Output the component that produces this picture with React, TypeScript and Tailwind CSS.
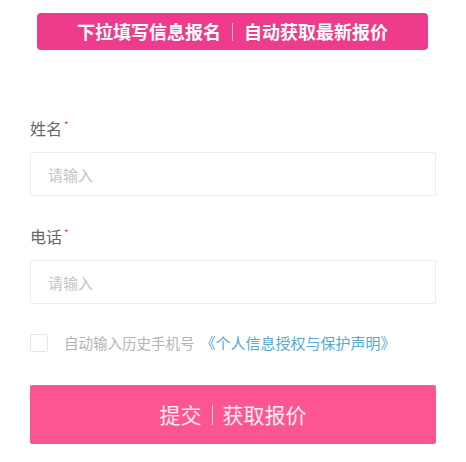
import React, { useState } from 'react';

const font = { fontFamily: '"Noto Sans CJK SC", "Noto Sans", sans-serif' };

const Field = ({ label, className }: { label: string; className?: string }) => (
  <div className={className}>
    <div className="flex items-start text-[16px] leading-[24px] text-[#666]">
      {label}
      <span className="text-[10px] leading-[14px] text-[#e04a5a] ml-[2px] mt-[2px]">*</span>
    </div>
    <input
      placeholder="请输入"
      className="mt-3 block w-full h-[44px] border border-[#ececec] rounded-[2px] pl-[17px] text-[15px] text-[#333] placeholder:text-[#c4c4c4] outline-none"
      style={font}
    />
  </div>
);

export default function App() {
  const [checked, setChecked] = useState(false);
  return (
    <div className="w-[466px] h-[462px] bg-white overflow-hidden" style={font}>
      <div className="pt-[13px] pl-[37px] pr-[38px]">
        <div className="h-[37px] rounded-[4px] bg-[#ee3b8b] flex items-center justify-center text-white font-bold text-[18px]">
          <span>下拉填写信息报名</span>
          <span className="w-px h-[18px] bg-white/60 mx-[11px]" />
          <span>自动获取最新报价</span>
        </div>
      </div>

      <div className="px-[30px]">
        <Field label="姓名" className="mt-[66px]" />
        <Field label="电话" className="mt-[28px]" />

        <label className="mt-[30px] flex items-center cursor-pointer">
          <span
            onClick={() => setChecked(!checked)}
            className="w-[18px] h-[18px] border border-[#e6e6e6] rounded-[2px] flex items-center justify-center"
          >
            {checked && <span className="w-[8px] h-[8px] bg-[#ee3b8b]" />}
          </span>
          <span className="ml-4 text-[14.5px] leading-[18px] text-[#b4b4b4]">
            自动输入历史手机号
            <span className="text-[15px] text-[#56a9cf] ml-[6px]">《个人信息授权与保护声明》</span>
          </span>
        </label>

        <button className="mt-[33px] w-full h-[59px] bg-[#fd5592] rounded-[2px] flex items-center justify-center text-[21px] text-white/90">
          <span>提交</span>
          <span className="w-px h-[20px] bg-white/70 mx-[10px]" />
          <span>获取报价</span>
        </button>
      </div>
    </div>
  );
}
